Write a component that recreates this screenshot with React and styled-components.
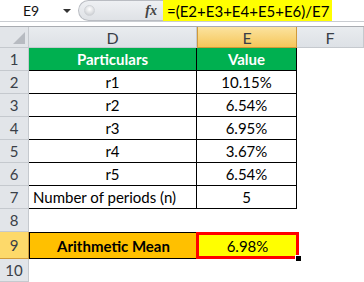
import React from "react";
import styled, { createGlobalStyle, css } from "styled-components";

const Global = createGlobalStyle`
  html, body { margin: 0; padding: 0; background: #fff; }
  body { font-family: Lato, "Open Sans", sans-serif; }
`;

const Page = styled.div`
  width: 364px;
  height: 282px;
  overflow: hidden;
  background: #fff;
`;

const FormulaBar = styled.div`
  display: flex;
  height: 21px;
  border-bottom: 1px solid #c9ccd1;
  background: #fff;
`;

const NameBox = styled.div`
  width: 78px;
  display: flex;
  align-items: center;
  justify-content: space-between;
  padding: 0 7px 0 23px;
  box-sizing: border-box;
  font-size: 14px;
  color: #111;
`;

const Arrow = styled.span`
  width: 0;
  height: 0;
  border-left: 4px solid transparent;
  border-right: 4px solid transparent;
  border-top: 4px solid #333;
`;

const ToolArea = styled.div`
  width: 85px;
  display: flex;
  align-items: center;
  justify-content: space-between;
  background: linear-gradient(#eef0f3, #dfe2e6);
  border: 1px solid #b9bcc2;
  border-right: none;
  border-radius: 11px 0 0 11px;
  padding: 0 6px 0 5px;
  box-sizing: border-box;
`;

const Grip = styled.span`
  width: 9px;
  height: 9px;
  border-radius: 50%;
  background: radial-gradient(circle at 50% 35%, #ffffff, #c3c6cb);
  border: 1px solid #d0d3d7;
`;

const Fx = styled.span`
  font-family: "Liberation Serif", serif;
  font-style: italic;
  font-weight: bold;
  font-size: 14px;
  color: #444;
`;

const Formula = styled.div`
  flex: 1;
  display: flex;
  align-items: center;
  font-size: 15px;
  color: #000;
`;

const Highlight = styled.span`
  background: #ffff00;
  height: 100%;
  display: flex;
  align-items: center;
  padding: 0 3px 0 4px;
`;

const Gap = styled.div`
  height: 4px;
  border-bottom: 1px solid #a9acb1;
`;

const Sheet = styled.div`
  display: grid;
  grid-template-columns: 29px 168px 100px 1fr;
  grid-template-rows: 21px repeat(8, 23px) 27px 23px;
`;

const headerSel = css`
  background: linear-gradient(#fbe39f, #f6c65a);
  border-color: #d09a3a;
`;

const Corner = styled.div`
  background: #e2e5e9;
  border-right: 1px solid #c5c9ce;
  border-bottom: 1px solid #c5c9ce;
  position: relative;
  &::after {
    content: "";
    position: absolute;
    right: 3px;
    bottom: 3px;
    border-left: 12px solid transparent;
    border-bottom: 12px solid #b7bbc1;
  }
`;

const ColHeader = styled.div`
  display: flex;
  align-items: center;
  justify-content: center;
  background: linear-gradient(#e9ecef, #dde1e6);
  border-right: 1px solid #c5c9ce;
  border-bottom: 1px solid #c5c9ce;
  font-size: 16px;
  color: #3a3f47;
  box-sizing: border-box;
  ${(p) => p.$selected && headerSel}
  ${(p) => p.$selected && css`border-left: 1px solid #d09a3a;`}
`;

const RowHeader = styled.div`
  display: flex;
  align-items: center;
  justify-content: center;
  background: #e2e5e9;
  border-right: 1px solid #c5c9ce;
  border-bottom: 1px solid #c5c9ce;
  font-size: 15px;
  color: #3a3f47;
  box-sizing: border-box;
  ${(p) => p.$selected && headerSel}
  ${(p) => p.$selected && css`background: #fdd96a;`}
`;

const Cell = styled.div`
  display: flex;
  align-items: center;
  justify-content: ${(p) => (p.$left ? "flex-start" : "center")};
  padding-left: ${(p) => (p.$left ? "4px" : "0")};
  box-sizing: border-box;
  font-size: 15px;
  color: #000;
  white-space: nowrap;
  ${(p) =>
    p.$table &&
    css`
      border-right: 1px solid #000;
      border-bottom: 1px solid #000;
    `}
  ${(p) =>
    p.$head &&
    css`
      background: #00b050;
      color: #fff;
      font-weight: bold;
    `}
`;

const MeanLabel = styled(Cell)`
  background: #ffc000;
  font-weight: bold;
  border-top: 1px solid #000;
  border-bottom: 1px solid #000;
  border-left: 1px solid #000;
`;

const ResultCell = styled(Cell)`
  background: #ffff00;
  border: 3px solid #ff0000;
  position: relative;
  margin-left: -1px;
  margin-right: -2px;
  &::after {
    content: "";
    position: absolute;
    right: -5px;
    bottom: -5px;
    width: 5px;
    height: 5px;
    background: #000;
    border: 1px solid #fff;
    border-right: none;
    border-bottom: none;
  }
`;

const rows = [
  ["r1", "10.15%"],
  ["r2", "6.54%"],
  ["r3", "6.95%"],
  ["r4", "3.67%"],
  ["r5", "6.54%"],
];

export default function App() {
  return (
    <Page>
      <Global />
      <FormulaBar>
        <NameBox>
          <span>E9</span>
          <Arrow />
        </NameBox>
        <ToolArea>
          <Grip />
          <Fx>fx</Fx>
        </ToolArea>
        <Formula>
          <Highlight>=(E2+E3+E4+E5+E6)/E7</Highlight>
        </Formula>
      </FormulaBar>
      <Gap />
      <Sheet>
        <Corner />
        <ColHeader>D</ColHeader>
        <ColHeader $selected>E</ColHeader>
        <ColHeader>F</ColHeader>

        <RowHeader>1</RowHeader>
        <Cell $table $head>Particulars</Cell>
        <Cell $table $head>Value</Cell>
        <Cell />

        {rows.map(([p, v], i) => (
          <React.Fragment key={p}>
            <RowHeader>{i + 2}</RowHeader>
            <Cell $table>{p}</Cell>
            <Cell $table>{v}</Cell>
            <Cell />
          </React.Fragment>
        ))}

        <RowHeader>7</RowHeader>
        <Cell $table $left>Number of periods (n)</Cell>
        <Cell $table>5</Cell>
        <Cell />

        <RowHeader>8</RowHeader>
        <Cell />
        <Cell />
        <Cell />

        <RowHeader $selected>9</RowHeader>
        <MeanLabel>Arithmetic Mean</MeanLabel>
        <ResultCell>6.98%</ResultCell>
        <Cell />

        <RowHeader>10</RowHeader>
        <Cell />
        <Cell />
        <Cell />
      </Sheet>
    </Page>
  );
}
